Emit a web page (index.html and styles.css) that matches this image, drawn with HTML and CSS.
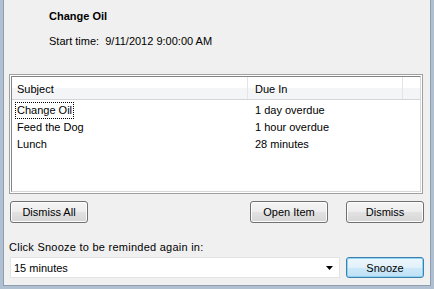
FILE: index.html
```html
<!DOCTYPE html>
<html lang="en">
<head>
    <meta charset="UTF-8">
    <title>Reminder</title>
    <link rel="stylesheet" href="styles.css">
</head>
<body>

<div class="window">
    <div class="summary">
        <div class="title">Change Oil</div>
        <div class="start-time">Start time:&nbsp; 9/11/2012 9:00:00 AM</div>
    </div>

    <div class="list">
        <div class="list-inner">
            <div class="list-head">
                <div class="head-col col-subject">Subject</div>
                <div class="head-col col-due">Due In</div>
                <div class="head-col col-filler"></div>
            </div>
            <div class="list-row">
                <div class="col-subject"><span class="focused">Change Oil</span></div>
                <div class="col-due">1 day overdue</div>
            </div>
            <div class="list-row">
                <div class="col-subject"><span class="plain">Feed the Dog</span></div>
                <div class="col-due">1 hour overdue</div>
            </div>
            <div class="list-row">
                <div class="col-subject"><span class="plain">Lunch</span></div>
                <div class="col-due">28 minutes</div>
            </div>
        </div>
    </div>

    <div class="actions">
        <button class="btn">Dismiss All</button>
        <div class="spacer"></div>
        <button class="btn">Open Item</button>
        <button class="btn">Dismiss</button>
    </div>

    <div class="snooze-label">Click Snooze to be reminded again in:</div>
    <div class="snooze-row">
        <div class="combo">
            <span>15 minutes</span>
            <svg class="combo-arrow" width="7" height="4" viewBox="0 0 7 4"><path d="M0 0h7L3.5 4z" fill="#000"/></svg>
        </div>
        <button class="btn btn-default">Snooze</button>
    </div>
</div>

</body>
</html>
```

FILE: styles.css
```css
body {
    margin: 0;
    padding: 0;
    font-family: "Liberation Sans", Arial, sans-serif;
    font-size: 11px;
    color: #000;
    background-color: #f0f0f0;
}
.window {
    width: 434px;
    height: 289px;
    box-sizing: border-box;
    background-color: #f0f0f0;
    border-left: 3px solid #b1c0d0;
    border-right: 3px solid #b1c0d0;
    border-bottom: 3px solid #b1c0d0;
    box-shadow: inset 1px 0 #8e9eb0, inset -1px 0 #8e9eb0, inset 0 -1px #8e9eb0;
    overflow: hidden;
}
.summary {
    padding: 10px 0 0 46px;
    line-height: 13px;
}
.title {
    font-weight: bold;
}
.start-time {
    margin-top: 12px;
}

.list {
    margin: 26px 8px 0 6px;
    height: 120px;
    box-sizing: border-box;
    border: 1px solid #a0a0a0;
    background-color: #fff;
    padding: 1px;
}
.list-inner {
    height: 100%;
    box-sizing: border-box;
    border: 1px solid #838383;
    border-right-color: #d8d8d8;
    border-bottom-color: #d8d8d8;
}
.list-head {
    display: flex;
    height: 22px;
    border-bottom: 1px solid #d5d5d5;
    background: linear-gradient(#ffffff 0%, #ffffff 50%, #f4f5f7 51%, #f4f5f7 100%);
    margin-bottom: 2px;
}
.head-col {
    line-height: 24px;
    box-sizing: border-box;
    border-right: 1px solid #e3e4e6;
    padding-left: 5px;
}
.col-subject {
    width: 236px;
    flex: none;
    box-sizing: border-box;
}
.col-due {
    width: 155px;
    flex: none;
    box-sizing: border-box;
    padding-left: 7px;
}
.head-col.col-due {
    padding-left: 7px;
}
.col-filler {
    flex: 1;
    border-right: none;
}
.list-row {
    display: flex;
    height: 17px;
    line-height: 15px;
}
.list-row .col-subject {
    padding-left: 3px;
}
.list-row .col-due {
    padding-top: 1px;
}
.focused, .plain {
    display: inline-block;
    padding: 0 1px;
    border: 1px dotted transparent;
}
.focused {
    border-color: #000;
}

.actions {
    display: flex;
    gap: 18px;
    margin: 7px 7px 0 7px;
}
.spacer {
    flex: 1;
}
.btn {
    width: 78px;
    height: 22px;
    padding: 0;
    font-family: "Liberation Sans", Arial, sans-serif;
    font-size: 11px;
    color: #000;
    border: 1px solid #707070;
    border-radius: 3px;
    background: linear-gradient(#f4f4f4 0%, #ededed 50%, #e2e2e2 51%, #d6d6d6 100%);
    box-shadow: inset 0 0 0 1px #fcfcfc;
}
.btn-default {
    height: 21px;
    border-color: #3c7fb1;
    box-shadow: inset 0 0 0 1px #8fd3ef;
    background: linear-gradient(#eef7fc 0%, #e1f1fb 50%, #cde9f9 51%, #bfe1f5 100%);
}

.snooze-label {
    margin: 18px 0 0 6px;
    line-height: 13px;
    letter-spacing: 0.25px;
}
.snooze-row {
    display: flex;
    gap: 6px;
    margin: 3px 7px 0 7px;
    align-items: flex-start;
}
.combo {
    flex: 1;
    height: 21px;
    box-sizing: border-box;
    border: 1px solid #e3e3e3;
    background-color: #fff;
    display: flex;
    align-items: center;
    justify-content: space-between;
    padding: 0 6px 0 3px;
}
.combo-arrow {
    display: block;
}
```
